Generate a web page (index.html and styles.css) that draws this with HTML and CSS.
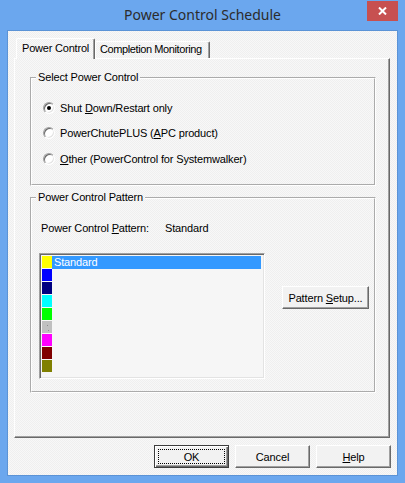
FILE: index.html
```html
<!DOCTYPE html>
<html>
<head>
<meta charset="utf-8">
<link rel="stylesheet" href="styles.css">
</head>
<body>
<div class="window">
  <div class="titlebar">
    <div class="title">Power Control Schedule</div>
    <div class="close">
      <svg width="9" height="8" viewBox="0 0 9 8"><path d="M1 0.5 L8 7.5 M8 0.5 L1 7.5" stroke="#fff" stroke-width="2"/></svg>
    </div>
  </div>
  <div class="client">
    <div class="tabrow">
      <div class="tab sel">Power Control</div>
      <div class="tab">Completion Monitoring</div>
    </div>
    <div class="panel">
      <fieldset class="group g1">
        <legend>Select Power Control</legend>
        <div class="radios">
          <div class="radio-row r1"><span class="radio on"></span><span>Shut <u>D</u>own/Restart only</span></div>
          <div class="radio-row r2"><span class="radio"></span><span>PowerChutePLUS (<u>A</u>PC product)</span></div>
          <div class="radio-row r3"><span class="radio"></span><span><u>O</u>ther (PowerControl for Systemwalker)</span></div>
        </div>
      </fieldset>
      <fieldset class="group g2">
        <legend>Power Control Pattern</legend>
        <div class="pattern-row"><span class="plabel">Power Control <u>P</u>attern:</span><span>Standard</span></div>
        <div class="list-row">
          <div class="listbox">
            <div class="item"><span class="sw" style="background:#ffff00"></span><span class="itext hl">Standard</span></div>
            <div class="item"><span class="sw" style="background:#0000ff"></span><span class="itext"></span></div>
            <div class="item"><span class="sw" style="background:#000080"></span><span class="itext"></span></div>
            <div class="item"><span class="sw" style="background:#00ffff"></span><span class="itext"></span></div>
            <div class="item"><span class="sw" style="background:#00ff00"></span><span class="itext"></span></div>
            <div class="item"><span class="sw silver" style="background:#c0c0c0"></span><span class="itext"></span></div>
            <div class="item"><span class="sw" style="background:#ff00ff"></span><span class="itext"></span></div>
            <div class="item"><span class="sw" style="background:#800000"></span><span class="itext"></span></div>
            <div class="item"><span class="sw" style="background:#808000"></span><span class="itext"></span></div>
          </div>
          <div class="btn setup"><span>Pattern <u>S</u>etup...</span></div>
        </div>
      </fieldset>
    </div>
    <div class="buttons">
      <div class="btn default"><span class="focus">OK</span></div>
      <div class="btn"><span>Cancel</span></div>
      <div class="btn"><span><u>H</u>elp</span></div>
    </div>
  </div>
</div>
</body>
</html>
```
FILE: styles.css
```css
* { box-sizing: border-box; }
html, body { margin: 0; padding: 0; }
body {
  width: 405px; height: 483px; overflow: hidden;
  font-family: "Liberation Sans", Arial, sans-serif;
  font-size: 11px; color: #000;
  letter-spacing: -0.15px;
}
u { text-decoration: underline; text-underline-offset: 1px; }
.window {
  width: 405px; height: 483px;
  background: #6ba7ee;
  display: flex; flex-direction: column;
}
.titlebar {
  height: 31px; flex: none;
  display: grid; grid-template-columns: 1fr auto 1fr;
  align-items: start;
  letter-spacing: 0;
}
.title {
  grid-column: 2;
  font-family: "Noto Sans", "Open Sans", sans-serif;
  font-size: 14px; line-height: 20px; padding-top: 5px;
  color: #2b2b2b; white-space: nowrap;
}
.close {
  grid-column: 3; justify-self: end;
  margin-top: 1px; margin-right: 7px;
  width: 31px; height: 20px;
  background: #c75050;
  display: flex; align-items: center; justify-content: center;
}
.close svg { display: block; }
.client {
  flex: 1;
  margin: 0 8px 8px;
  box-shadow: 0 0 0 1px #5b93d6;
  background: repeating-conic-gradient(#efefef 0 25%, #f8f8f8 0 50%) 0 0 / 2px 2px;
  padding: 7px 6px 7px 6px;
  display: flex; flex-direction: column;
}
.tabrow {
  display: flex; align-items: flex-end;
  height: 20px; padding-left: 2px;
  position: relative; z-index: 1;
}
.tab {
  height: 17px;
  border-top: 1px solid #fff; border-left: 1px solid #fff;
  border-right: 1px solid #696969;
  box-shadow: inset -1px 0 #a0a0a0;
  border-top-left-radius: 2px; border-top-right-radius: 2px;
  padding: 1px 0 0 4px; line-height: 13px;
  white-space: nowrap; overflow: hidden;
  width: 115px;
  letter-spacing: -0.4px;
}
.tab.sel {
  height: 21px; width: 79px;
  margin-bottom: -1px;
  padding-top: 3px; padding-left: 5px;
  letter-spacing: -0.2px;
  background: repeating-conic-gradient(#efefef 0 25%, #f8f8f8 0 50%) 0 0 / 2px 2px;
}
.panel {
  height: 380px; margin-right: 1px;
  border-top: 1px solid #fff; border-left: 1px solid #fff;
  border-right: 1px solid #696969; border-bottom: 1px solid #696969;
  box-shadow: inset -1px -1px #a0a0a0;
  padding: 12px 13px 0 15px;
}
.group {
  margin: 0; padding: 0;
  border: 2px groove #fff;
  min-width: 0;
}
.group legend {
  margin-left: 4px; padding: 0 2px;
  line-height: 13px;
}
.g1 { height: 115px; margin-bottom: 5px; }
.g2 { height: 202px; }
.radios { padding-left: 11px; }
.radio-row {
  display: flex; align-items: center; gap: 5px;
  height: 14px; line-height: 14px; white-space: nowrap;
}
.r1 { margin-top: 17px; }
.r2 { margin-top: 11px; }
.r3 { margin-top: 12px; }
.radio {
  width: 12px; height: 12px; flex: none;
  border-radius: 50%;
  border: 1px solid; border-color: #a0a0a0 #fff #fff #a0a0a0;
  background: #fff;
  box-shadow: inset 1px 1px #696969, inset -1px -1px #e3e3e3;
  display: flex; align-items: center; justify-content: center;
}
.radio.on::after {
  content: ""; width: 4px; height: 4px; border-radius: 50%; background: #000;
}
.pattern-row {
  margin-top: 18px; padding-left: 9px;
  display: flex; line-height: 13px; white-space: nowrap;
}
.plabel { width: 124px; }
.list-row {
  margin-top: 18px; padding-left: 7px;
  display: flex; align-items: flex-start; gap: 17px;
}
.listbox {
  width: 226px; height: 126px;
  border: 1px solid; border-color: #a0a0a0 #fff #fff #a0a0a0;
  box-shadow: inset 1px 1px #696969, inset -1px -1px #e3e3e3;
  background: #f6f6f6;
  padding: 2px 2px 0 2px;
}
.item { display: flex; height: 13px; }
.sw { width: 10px; height: 12px; flex: none; position: relative; }
.sw.silver::before {
  content: ""; position: absolute; left: 5px; top: 4px; width: 1px; height: 1px;
  background: #8a8a8a; box-shadow: 1px 5px #8a8a8a;
}
.itext { flex: 1; margin-right: 1px; line-height: 13px; padding-left: 2px; }
.itext.hl { background: #3399ff; color: #fff; }
.btn {
  height: 23px;
  border: 1px solid; border-color: #fff #696969 #696969 #fff;
  box-shadow: inset -1px -1px #a0a0a0;
  background: #f2f2f2;
  display: flex; align-items: center; justify-content: center;
  white-space: nowrap;
}
.setup { width: 87px; margin-top: 33px; }
.buttons {
  margin-top: 7px;
  display: flex; justify-content: flex-end; gap: 6px;
}
.buttons .btn { width: 75px; }
.btn.default {
  border-color: #3c3c3c;
  box-shadow: inset 1px 1px #fff, inset -1px -1px #696969, inset -2px -2px #a0a0a0;
  padding: 3px;
  align-items: stretch;
}
.focus {
  flex: 1;
  border: 1px dotted #000;
  display: flex; align-items: center; justify-content: center;
}
```
